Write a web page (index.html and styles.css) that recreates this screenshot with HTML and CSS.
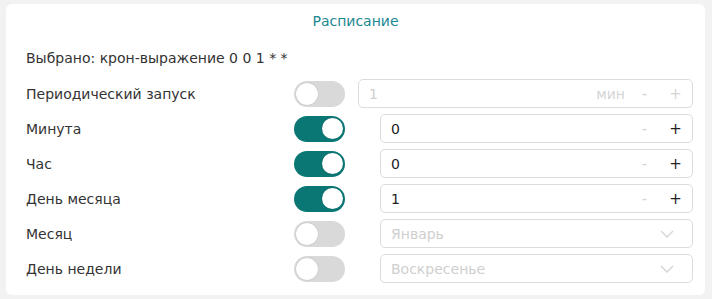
FILE: index.html
```html
<!DOCTYPE html>
<html lang="ru">
<head>
<meta charset="utf-8">
<link rel="stylesheet" href="styles.css">
</head>
<body>
<div class="card">
  <div class="title">Расписание</div>
  <div class="summary">Выбрано: крон-выражение 0 0 1 * *</div>
  <div class="rows">
    <div class="label">Периодический запуск</div>
    <div class="toggle"><span class="knob"></span></div>
    <div class="field field-wide disabled">
      <span class="value">1</span>
      <span class="unit">мин</span>
      <span class="btn">-</span>
      <span class="btn">+</span>
    </div>

    <div class="label">Минута</div>
    <div class="toggle on"><span class="knob"></span></div>
    <div class="field">
      <span class="value">0</span>
      <span class="btn dim">-</span>
      <span class="btn">+</span>
    </div>

    <div class="label">Час</div>
    <div class="toggle on"><span class="knob"></span></div>
    <div class="field">
      <span class="value">0</span>
      <span class="btn dim">-</span>
      <span class="btn">+</span>
    </div>

    <div class="label">День месяца</div>
    <div class="toggle on"><span class="knob"></span></div>
    <div class="field">
      <span class="value">1</span>
      <span class="btn dim">-</span>
      <span class="btn">+</span>
    </div>

    <div class="label">Месяц</div>
    <div class="toggle"><span class="knob"></span></div>
    <div class="field disabled">
      <span class="value">Январь</span>
      <svg class="chev" width="14" height="8" viewBox="0 0 14 8"><path d="M1 1 L7 7 L13 1" fill="none" stroke="#d4d4d4" stroke-width="1.4"/></svg>
    </div>

    <div class="label">День недели</div>
    <div class="toggle"><span class="knob"></span></div>
    <div class="field disabled">
      <span class="value">Воскресенье</span>
      <svg class="chev" width="14" height="8" viewBox="0 0 14 8"><path d="M1 1 L7 7 L13 1" fill="none" stroke="#d4d4d4" stroke-width="1.4"/></svg>
    </div>
  </div>
</div>
</body>
</html>
```

FILE: styles.css
```css
html, body {
  margin: 0;
  padding: 0;
}
body {
  background: #f2f2f2;
  font-family: "DejaVu Sans", sans-serif;
  font-size: 14px;
  color: #333;
  padding: 4px 7px 4px 6px;
  width: 712px;
  height: 299px;
  box-sizing: border-box;
}
.card {
  background: #fff;
  border-radius: 6px;
  height: 291px;
  box-sizing: border-box;
  padding: 7px 12px 0 20px;
}
.title {
  text-align: center;
  line-height: 20px;
  color: #1a8891;
  margin: 0 -12px 0 -20px;
}
.summary {
  line-height: 20px;
  margin-top: 17px;
}
.rows {
  margin-top: 11px;
  display: grid;
  grid-template-columns: 268px 51px 1fr;
  grid-auto-rows: 29px;
  row-gap: 6px;
  align-items: center;
}
.label {
  line-height: 20px;
}
.toggle {
  width: 51px;
  height: 26px;
  border-radius: 13px;
  background: #d9d9d9;
  position: relative;
  box-sizing: border-box;
}
.toggle .knob {
  position: absolute;
  top: 2px;
  left: 2px;
  width: 22px;
  height: 22px;
  border-radius: 50%;
  background: #fff;
  box-shadow: 0 0 1px rgba(0,0,0,0.3);
}
.toggle.on {
  background: #0a7775;
}
.toggle.on .knob {
  left: 28px;
  width: 21px;
  height: 21px;
  top: 2.5px;
}
.field {
  height: 29px;
  box-sizing: border-box;
  border: 1px solid #dcdcdc;
  border-radius: 5px;
  margin-left: 35px;
  display: flex;
  align-items: center;
  padding: 0 1px 0 10px;
  color: #222;
}
.field-wide {
  margin-left: 13px;
}
.field .value {
  flex: 1;
}
.field.disabled .value {
  color: #cfcfcf;
}
.unit {
  color: #d4d4d4;
  margin-right: 4px;
}
.btn {
  width: 31px;
  text-align: center;
  font-size: 15px;
  color: #222;
}
.btn.dim, .disabled .btn {
  color: #d4d4d4;
}
.chev {
  margin-right: 17px;
}
```
